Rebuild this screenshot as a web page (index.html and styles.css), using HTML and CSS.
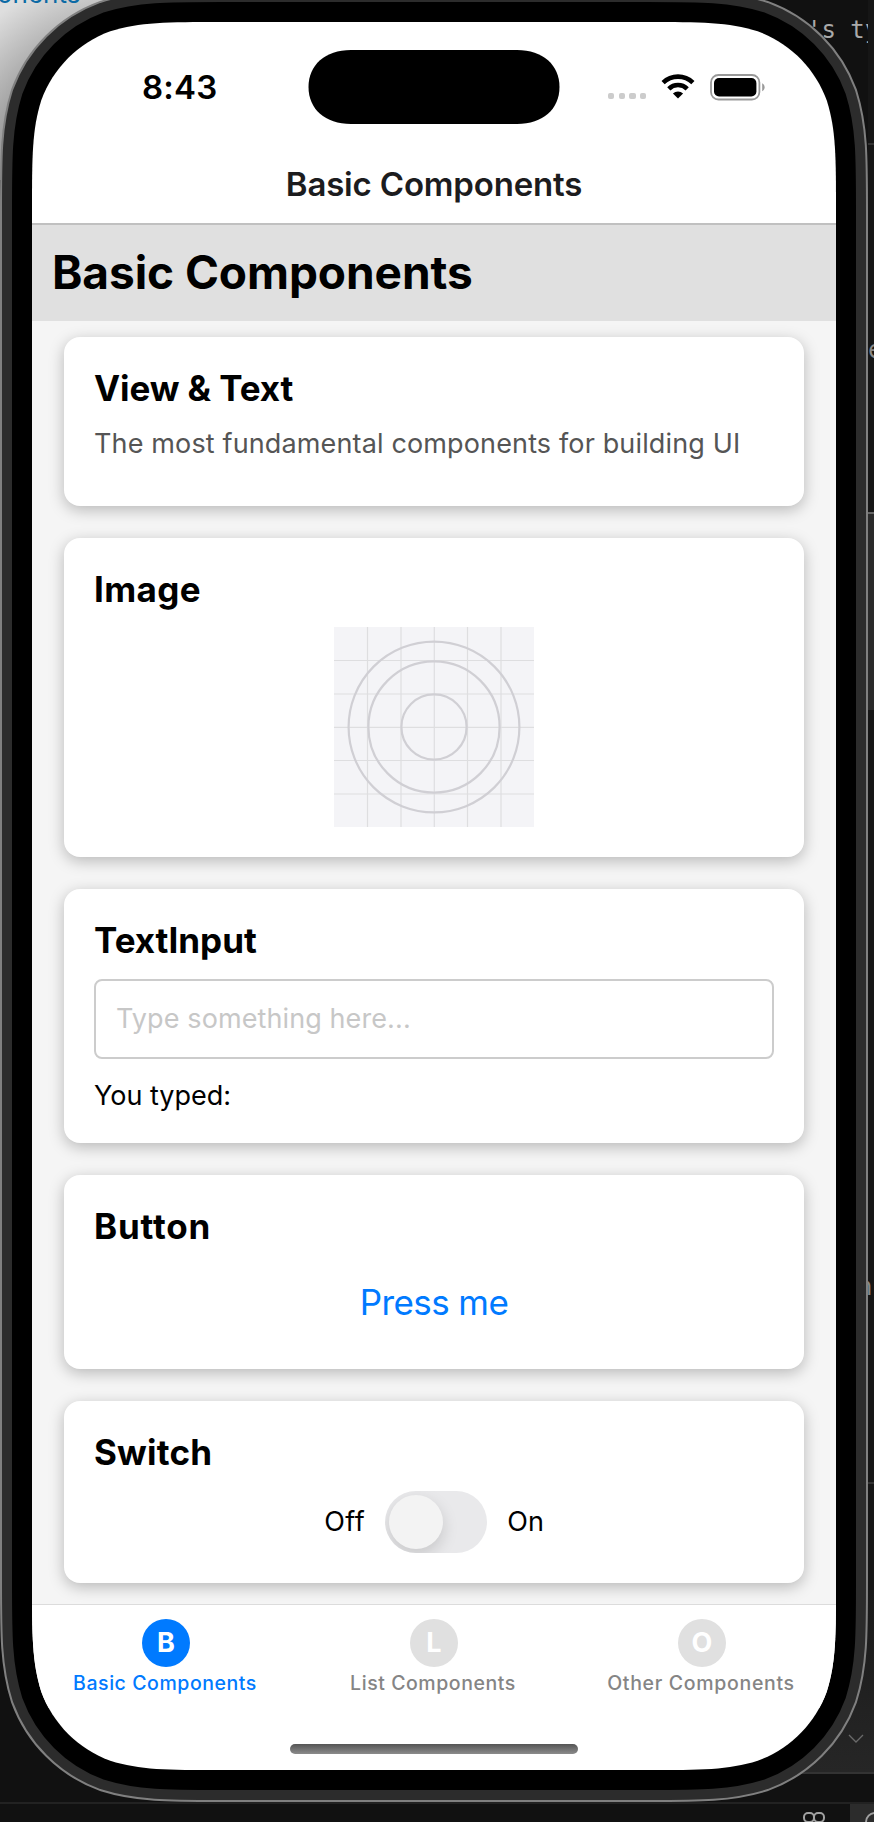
FILE: index.html
```html
<!DOCTYPE html>
<html lang="en">
<head>
<meta charset="utf-8">
<title>Basic Components</title>
<link rel="stylesheet" href="styles.css">
</head>
<body>
<div class="desktop">
  <div class="light-window"><span class="window-link">onents</span></div>
  <div class="code-line">'s ty</div>
  <div class="gutter"></div>
  <div class="strip-line strip-line-a"></div>
  <div class="strip-panel"></div>
  <div class="strip-letter">e</div>
  <div class="strip-letter strip-letter-b">n'</div>
  <div class="strip-line strip-line-b"></div>
  <div class="lower-panel"></div>
  <svg class="chevron" width="16" height="10" viewBox="0 0 16 10"><path d="M1 1l7 7 7-7" fill="none" stroke="#6a6a6a" stroke-width="1.3"/></svg>
  <div class="dock-line"></div>
  <div class="dock-tab"></div>
  <svg class="dock-icons" width="84" height="11" viewBox="0 0 84 11"><g fill="none" stroke="#a0a0a0" stroke-width="2"><rect x="14" y="2" width="10" height="9" rx="4"/><rect x="24" y="2" width="10" height="9" rx="4"/><circle cx="85" cy="11" r="9"/></g></svg>

  <svg class="frame" width="874" height="1822" viewBox="-32 -22 874 1822">
    <defs><path id="shell" d="M189.55 0H614.45C669.03 0 696.32 0 725.69 9.29C757.77 20.96 783.04 46.23 794.71 78.31C804 107.68 804 134.97 804 189.55V1558.45C804 1613.03 804 1640.32 794.71 1669.69C783.04 1701.77 757.77 1727.04 725.69 1738.71C696.32 1748 669.03 1748 614.45 1748H189.55C134.97 1748 107.68 1748 78.31 1738.71C46.23 1727.04 20.96 1701.77 9.29 1669.69C0 1640.32 0 1613.03 0 1558.45V189.55C0 134.97 0 107.68 9.29 78.31C20.96 46.23 46.23 20.96 78.31 9.29C107.68 0 134.97 0 189.55 0Z"/></defs>
    <use href="#shell" stroke="#808080" stroke-width="64"/>
    <use href="#shell" stroke="#2c2c2c" stroke-width="60"/>
    <use href="#shell" stroke="#000" stroke-width="40"/>
  </svg>

  <main class="screen">
    <header class="status">
      <span class="time">8:43</span>
      <svg class="island" width="252" height="74" viewBox="0 0 252 74"><path d="M43 0H209C235 0 251.500 15 251.500 37S235 74 209 74H43C17 74 .5 59 .5 37S17 0 43 0Z"/></svg>
      <span class="indicators">
        <span class="dots"><i></i><i></i><i></i><i></i></span>
        <svg class="wifi" width="34" height="25" viewBox="0 0 34 25"><g fill="none" stroke="#000" stroke-width="4.6"><path d="M2.1 8.6A21.5 21.5 0 0 1 31.9 8.6"/><path d="M7.8 14.8A13.2 13.2 0 0 1 26.2 14.8"/></g><path d="M17 24.6l-5.1-5.1a7.4 7.4 0 0 1 10.2 0z"/></svg>
        <svg class="battery" width="55" height="27" viewBox="0 0 55 27"><rect x="1" y="1" width="48.4" height="24.5" rx="7.5" fill="none" stroke="#999" stroke-width="1.8"/><rect x="4" y="4" width="42.4" height="18.5" rx="5"/><path d="M52.2 9.3c3.200 1.500 3.200 6.400 0 7.900z" fill="#999"/></svg>
      </span>
    </header>
    <div class="navbar"><span class="nav-title">Basic Components</span></div>
    <div class="section-head"><h1 class="section-title">Basic Components</h1></div>
    <div class="content">
      <section class="card card-view"><h2 class="title t-view">View &amp; Text</h2><p class="body desc">The most fundamental components for building UI</p></section>
      <section class="card card-image"><h2 class="title t-image">Image</h2>
        <svg class="placeholder" width="200" height="200" viewBox="0 0 200 200"><rect width="200" height="200" fill="#f4f4f7"/><path d="M33.5 0V200M67 0V200M100.3 0V200M133.5 0V200M167 0V200M0 33.5H200M0 67H200M0 100.4H200M0 133.5H200M0 167H200" stroke="#dedee0" stroke-width="1.2"/><g fill="none" stroke="#d0cfd4" stroke-width="2.2"><circle cx="100" cy="100" r="85.4"/><circle cx="100" cy="100" r="65.6"/><circle cx="100" cy="100" r="32.6"/></g></svg>
      </section>
      <section class="card card-input"><h2 class="title t-input">TextInput</h2><div class="field"><span class="body hint">Type something here...</span></div><p class="body typed">You typed:</p></section>
      <section class="card card-button"><h2 class="title t-button">Button</h2><div class="press">Press me</div></section>
      <section class="card card-switch"><h2 class="title t-switch">Switch</h2><div class="switch-row"><span class="body off">Off</span><span class="toggle"><span class="knob"></span></span><span class="body on">On</span></div></section>
    </div>
    <nav class="tabs">
      <div class="tab active"><span class="badge">B</span><span class="label l-basic">Basic Components</span></div>
      <div class="tab"><span class="badge">L</span><span class="label l-list">List Components</span></div>
      <div class="tab"><span class="badge">O</span><span class="label l-other">Other Components</span></div>
    </nav>
    <div class="home"><span class="home-bar"></span></div>
  </main>
</div>
</body>
</html>
```
FILE: styles.css
```css
* { box-sizing: border-box; }
body { margin: 0; font-family: Inter, "Liberation Sans", sans-serif; color: #000; }
h1, h2, p { margin: 0; }
.desktop { position: relative; width: 874px; height: 1822px; overflow: hidden; background: #111; padding: 22px 0 0 32px; }
.light-window { position: absolute; left: 0; top: 0; width: 130px; height: 180px; background: radial-gradient(circle at 100% 100%, #777 40%, #dedede 95%); overflow: hidden; }
.window-link { position: absolute; left: -3px; top: -20px; font-size: 26px; line-height: 28px; color: #0b6aa5; }
.code-line { position: absolute; left: 807px; top: 15px; width: 61px; overflow: hidden; white-space: nowrap; font: 24px/30px "DejaVu Sans Mono", monospace; color: #aaa; }
.gutter { position: absolute; left: 868px; top: 0; width: 6px; height: 1590px; background: #161616; }
.strip-line { position: absolute; left: 868px; width: 6px; height: 2px; background: #333; }
.strip-line-a { top: 143px; }
.strip-line-b { top: 1482px; }
.strip-panel { position: absolute; left: 868px; top: 512px; width: 6px; height: 198px; background: #2a2a2a; border-top: 2px solid #666; }
.strip-letter { position: absolute; left: 868px; top: 335px; width: 6px; overflow: hidden; font: 24px/30px "DejaVu Sans Mono", monospace; color: #888; }
.strip-letter-b { top: 1272px; text-indent: -10px; }
.lower-panel { position: absolute; left: 790px; top: 1590px; width: 84px; height: 184px; background: linear-gradient(#1a1a1a, #262626); border-bottom: 2px solid #333; }
.chevron { position: absolute; left: 848px; top: 1734px; }
.dock-line { position: absolute; left: 0; top: 1802px; width: 874px; height: 2px; background: #222; }
.dock-tab { position: absolute; left: 850px; top: 1804px; width: 24px; height: 18px; background: #2c2c2c; }
.dock-icons { position: absolute; left: 790px; top: 1811px; }
.frame { position: absolute; left: 0; top: 0; }
.screen { position: relative; width: 804px; height: 1748px; background: #fff; display: flex; flex-direction: column; clip-path: path("M189.55 0H614.45C669.03 0 696.32 0 725.69 9.29C757.77 20.96 783.04 46.23 794.71 78.31C804 107.68 804 134.97 804 189.55V1558.45C804 1613.03 804 1640.32 794.71 1669.69C783.04 1701.77 757.77 1727.04 725.69 1738.71C696.32 1748 669.03 1748 614.45 1748H189.55C134.97 1748 107.68 1748 78.31 1738.71C46.23 1727.04 20.96 1701.77 9.29 1669.69C0 1640.32 0 1613.03 0 1558.45V189.55C0 134.97 0 107.68 9.29 78.31C20.96 46.23 46.23 20.96 78.31 9.29C107.68 0 134.97 0 189.55 0Z"); }
.status { display: grid; grid-template-columns: 276px 252px 1fr; height: 113px; padding-top: 27.5px; }
.time { padding-left: 110px; font-size: 33px; font-weight: 600; line-height: 75px; letter-spacing: 0.2px; }
.island { display: block; }
.indicators { display: flex; padding: 24.5px 0 0 48px; }
.dots { display: flex; gap: 4.4px; padding-top: 19px; width: 53px; }
.dots i { width: 6.3px; height: 6.3px; border-radius: 2px; background: #ccc; }
.battery { margin-left: 14.5px; }
.navbar { height: 90px; border-bottom: 2px solid #c0c0c0; text-align: center; }
.nav-title { font-size: 33px; font-weight: 600; line-height: 99px; color: #1c1c1e; letter-spacing: -0.18px; }
.section-head { height: 96px; background: #e0e0e0; padding-left: 20px; }
.section-title { font-size: 46px; font-weight: 700; line-height: 94px; letter-spacing: -0.07px; }
.content { height: 1283px; background: #f5f5f5; padding: 16px 32px 0; display: flex; flex-direction: column; gap: 32px; overflow: hidden; }
.card { flex: none; background: #fff; border-radius: 16px; padding: 30px; box-shadow: 0 4px 15.4px rgba(0,0,0,.25); }
.card-view { height: 169px; }
.card-image { height: 319px; }
.card-input { height: 254px; }
.card-button { height: 194px; }
.card-switch { height: 182px; }
.title { font-size: 35px; font-weight: 700; line-height: 43px; margin-bottom: 17px; white-space: nowrap; }
.t-view { letter-spacing: -0.1px; }
.t-image { letter-spacing: 0.4px; }
.t-button { letter-spacing: 0.8px; }
.t-switch { letter-spacing: 0.2px; }
.body { font-size: 27px; line-height: 34px; white-space: nowrap; }
.desc { color: #555; letter-spacing: 0.14px; line-height: 33px; }
.placeholder { display: block; margin: -1px auto 0; }
.field { height: 80px; border: 2px solid #ccc; border-radius: 8px; padding: 21px 20px; }
.hint { color: #c7c7c7; letter-spacing: 0.1px; }
.typed { margin-top: 20px; }
.press { padding-top: 16px; text-align: center; font-size: 35px; line-height: 43px; letter-spacing: -0.6px; color: #007aff; }
.switch-row { display: flex; justify-content: center; align-items: center; gap: 20px; height: 62px; }
.off { letter-spacing: 0.5px; }
.toggle { width: 102px; height: 62px; border-radius: 31px; background: #e9e9eb; padding: 4px; overflow: hidden; }
.knob { display: block; width: 54px; height: 54px; border-radius: 50%; background: #f3f3f3; box-shadow: 0 6px 16px rgba(0,0,0,.15); }
.tabs { height: 104px; border-top: 1px solid #dcdcdc; display: grid; grid-template-columns: repeat(3, 1fr); background: #fff; }
.tab { display: flex; flex-direction: column; align-items: center; padding-top: 14px; color: #858585; }
.badge { width: 48px; height: 48px; border-radius: 50%; background: #e0e0e0; color: #fff; text-align: center; font-size: 27px; font-weight: 700; line-height: 48px; }
.active { color: #007aff; }
.active .badge { background: #007aff; }
.label { font-size: 19.5px; font-weight: 500; line-height: 24px; margin-top: 4px; margin-right: 2px; letter-spacing: 0.56px; white-space: nowrap; }
.l-other { letter-spacing: 0.68px; }
.home { padding: 36px 0 0 258px; }
.home-bar { display: block; width: 288px; height: 10px; border-radius: 5px; background: linear-gradient(#555, #8c8c8c); }
```
